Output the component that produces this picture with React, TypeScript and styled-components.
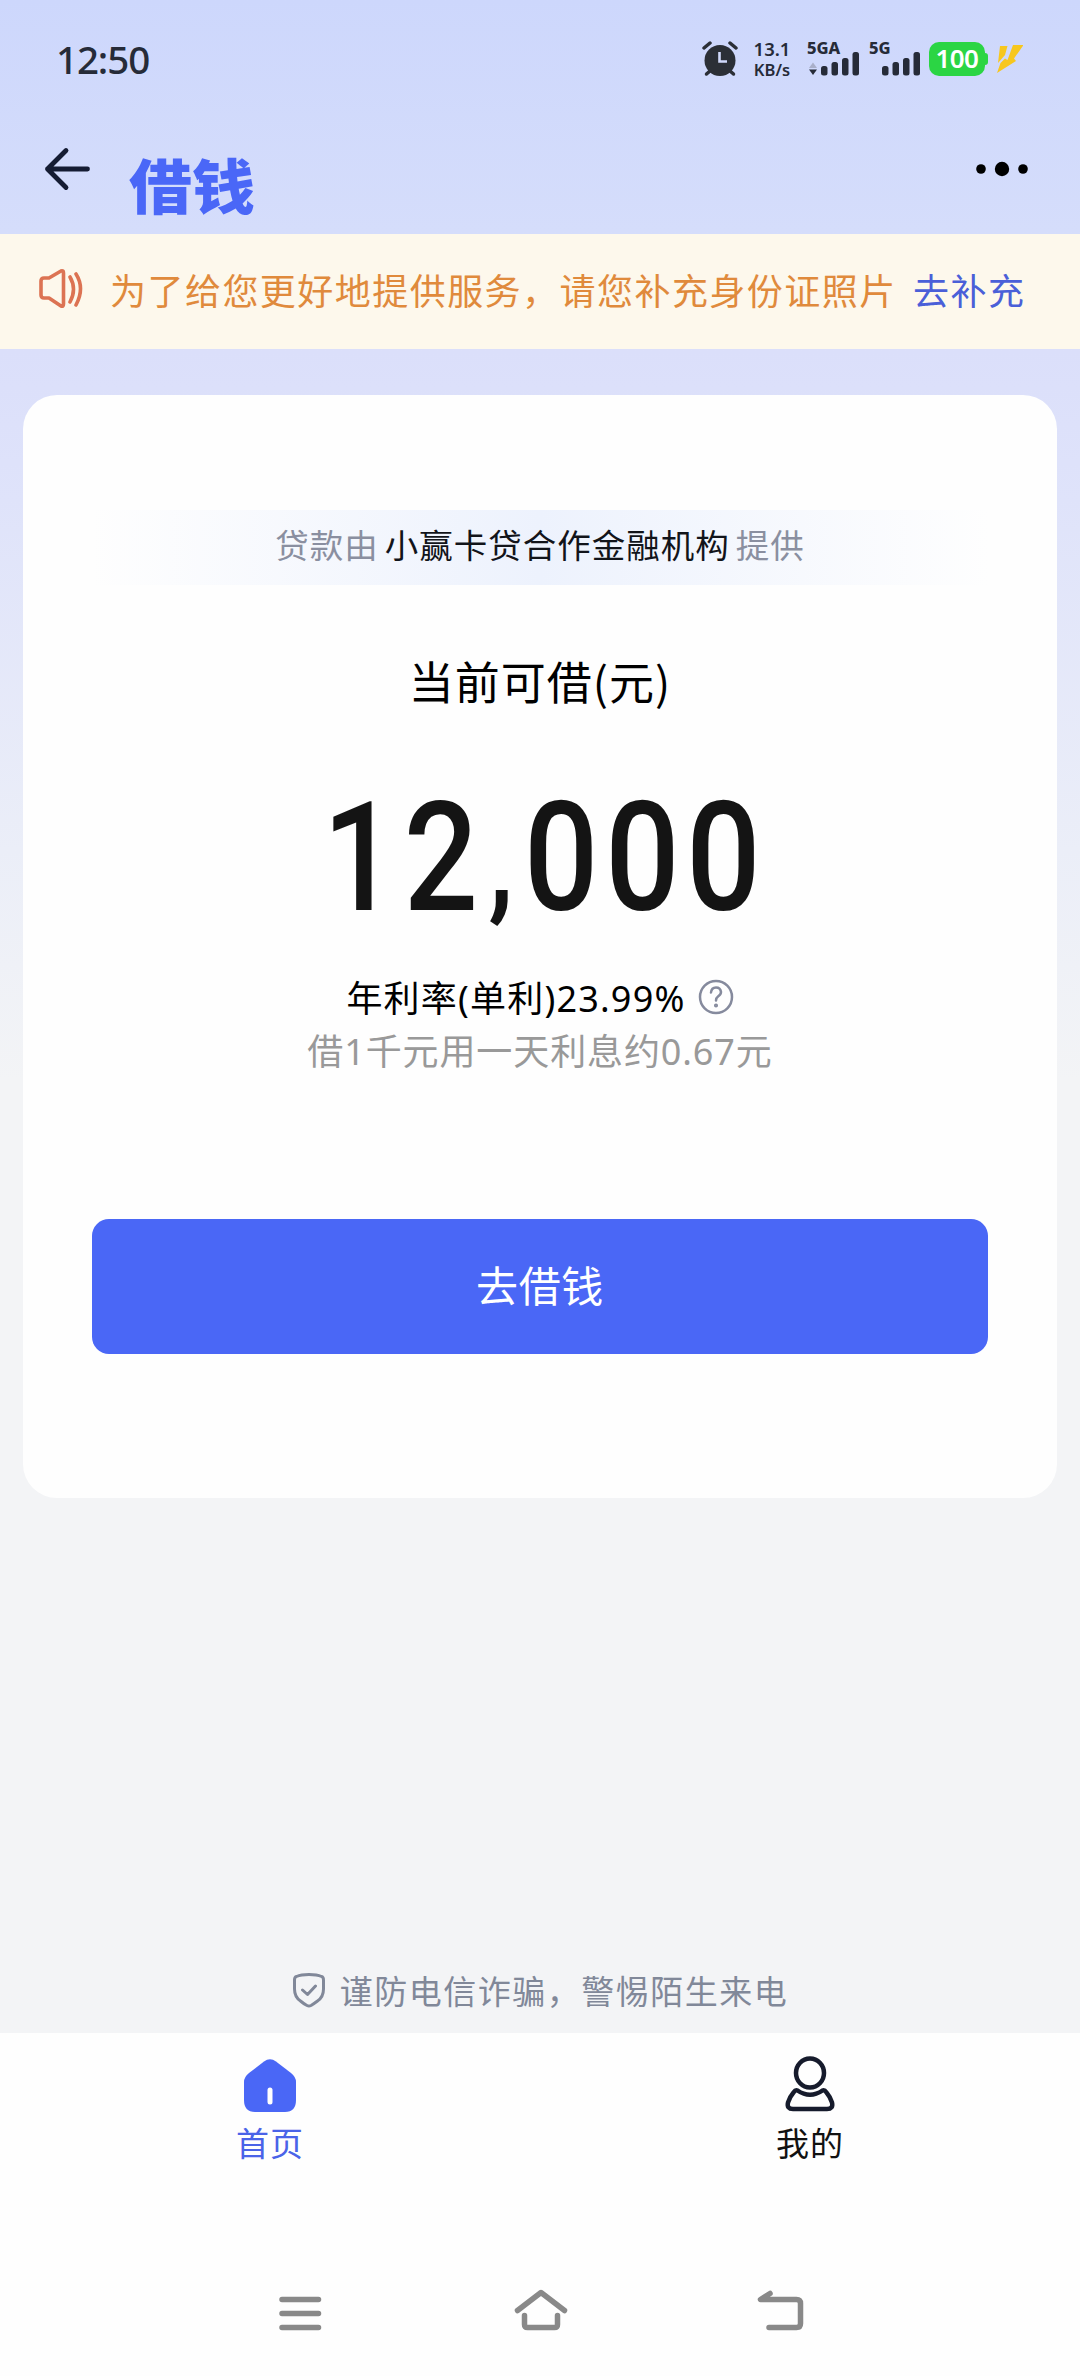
import React from 'react';
import styled, { createGlobalStyle } from 'styled-components';

const Global = createGlobalStyle`
  * { box-sizing: border-box; }
  body {
    margin: 0;
    font-family: "Noto Sans", "Noto Sans CJK SC", sans-serif;
    color: #000;
  }
`;

const Screen = styled.main`
  width: 1080px;
  height: 2376px;
  display: flex;
  flex-direction: column;
  overflow: hidden;
  background: linear-gradient(180deg, #cdd7fc 0, #d5ddfb 230px, #dbdffa 350px, #dfe3fa 500px, #ebeef8 850px, #f3f4f6 1080px, #f3f4f6 100%);
`;

const StatusBar = styled.header`
  height: 118px;
  padding: 0 57px 0 56px;
  display: flex;
  align-items: center;
  justify-content: space-between;
  color: #262b38;
`;

const Clock = styled.time`
  font: 500 38.5px/40px "Noto Sans", sans-serif;
  letter-spacing: -1.1px;
  width: 110px;
  padding-bottom: 1px;
  white-space: nowrap;
`;

const StatusIcons = styled.div`
  display: flex;
  align-items: center;
  height: 36px;
`;

const Speed = styled.div`
  width: 40px;
  margin: 0 15px 0 14px;
  display: flex;
  flex-direction: column;
  align-items: center;
  font: 600 18.5px/21px "Noto Sans", sans-serif;
  span:last-child { font-size: 16.5px; }
`;

const Signal = styled.div<{ $width: number }>`
  width: ${p => p.$width}px;
  height: 36px;
  display: flex;
  flex-direction: column;
  font: 800 16.5px/14px "Noto Sans", sans-serif;
  svg { display: block; margin-top: -4px; }
`;

const Battery = styled.div`
  width: 56px;
  height: 34px;
  border-radius: 10px;
  background: #2bd544;
  color: #fff;
  font: 600 26px/33px "Noto Sans", sans-serif;
  letter-spacing: -.6px;
  text-align: center;
  position: relative;
  &::after {
    content: "";
    position: absolute;
    right: -3px;
    top: 11px;
    width: 4px;
    height: 12px;
    border-radius: 0 3px 3px 0;
    background: #2bd544;
  }
`;

const TitleBar = styled.div`
  height: 116px;
  padding: 27px 52px 0 43px;
  display: flex;
  align-items: flex-start;
`;

const Title = styled.h1`
  margin: 6px auto 0 36px;
  font: 900 63px/66px "Noto Sans CJK SC", sans-serif;
  color: #4a67f7;
  transform: scaleY(.94);
`;

const Notice = styled.section`
  height: 115px;
  padding: 0 50px 5px 37px;
  display: flex;
  align-items: center;
  background: #fdf8ec;
  font-size: 36px;
  letter-spacing: 1.46px;
  white-space: nowrap;
  color: #e08a3c;
`;

const NoticeText = styled.span`
  width: 803px;
  margin-left: 25px;
`;

const NoticeLink = styled.a`
  color: #4a5fd8;
`;

const Card = styled.section`
  height: 1103px;
  margin: 46px 23px 0;
  padding: 115px 69px 0;
  border-radius: 34px;
  background: #fefefe;
  display: flex;
  flex-direction: column;
  align-items: center;
  white-space: nowrap;
`;

const Provider = styled.p`
  width: 100%;
  height: 75px;
  margin: 0;
  display: flex;
  justify-content: center;
  gap: 6px;
  line-height: 71px;
  font-size: 33.5px;
  letter-spacing: 1px;
  color: #8a8fa0;
  background: linear-gradient(90deg, #fefefe 0%, #edf2fd 50%, #fefefe 100%);
  strong { font-weight: 400; color: #12141a; }
`;

const Caption = styled.h2`
  margin: 66px 0 3px;
  font: 400 45px/60px "Noto Sans CJK SC", sans-serif;
  letter-spacing: 1px;
`;

const Amount = styled.div`
  margin-top: 59px;
  height: 170px;
  padding-left: 11px;
  font: 500 152px/170px Roboto, sans-serif;
  letter-spacing: 8px;
  color: #141414;
  transform: scaleX(.86);
`;

const Comma = styled.span`
  position: relative;
  top: -5px;
  margin: 0 4px 0 4px;
  font-size: 132px;
  line-height: 1;
`;

const Rate = styled.div`
  height: 54px;
  margin-top: 27px;
  display: flex;
  align-items: center;
  gap: 12px;
  font-size: 36px;
  letter-spacing: 1.2px;
  padding-bottom: 1px;
`;

const Daily = styled.p`
  margin: 0;
  font-size: 36px;
  line-height: 56px;
  letter-spacing: .9px;
  color: #999;
`;

const Action = styled.button`
  width: 100%;
  height: 135px;
  margin-top: 139px;
  padding: 0 0 5px;
  border: 0;
  border-radius: 17px;
  background: #4a67f6;
  color: #fff;
  font: 400 42px/60px "Noto Sans CJK SC", sans-serif;
  letter-spacing: .7px;
`;

const Warning = styled.footer`
  height: 84px;
  margin-top: auto;
  padding-bottom: 2px;
  display: flex;
  align-items: center;
  justify-content: center;
  gap: 14px;
  font-size: 33px;
  letter-spacing: 1.5px;
  color: #818899;
`;

const Tabs = styled.nav`
  height: 206px;
  display: grid;
  grid-template-columns: 1fr 1fr;
  background: #fefefe;
`;

const Tab = styled.a<{ $active?: boolean }>`
  display: flex;
  flex-direction: column;
  align-items: center;
  padding-top: 21px;
  font-size: 33px;
  line-height: 46px;
  letter-spacing: 1px;
  color: ${p => (p.$active ? '#4a63e8' : '#111')};
  svg { margin-bottom: 7px; }
`;

const SystemNav = styled.nav`
  height: 137px;
  padding: 45px 272px 0 273px;
  display: flex;
  justify-content: space-between;
  background: #fefefe;
`;

const Bars = () => (
  <g fill="#262b38">
    <rect x="0" y="15" width="6.5" height="9.5" rx="2.5" />
    <rect x="10.5" y="11" width="6.5" height="13.5" rx="2.5" />
    <rect x="21" y="7" width="6.5" height="17.5" rx="2.5" />
    <rect x="31.5" y="1" width="6.5" height="23.5" rx="2.5" />
  </g>
);

const AlarmIcon = () => (
  <svg width="36" height="36" viewBox="0 0 36 36" fill="none" strokeLinecap="round">
    <path d="M8 30 4.5 33M28 30l3.500 3" stroke="#2b2f36" strokeWidth="3.500" />
    <circle cx="18" cy="19.500" r="15.500" fill="#2b2f36" />
    <path d="M2 7 8 2M34 7 28 2" stroke="#2b2f36" strokeWidth="3.500" />
    <path d="M17.500 11v9.500H25" stroke="#d0d9fb" strokeWidth="2.600" strokeLinecap="butt" />
  </svg>
);

export default function App() {
  return (
    <>
      <Global />
      <Screen>
        <StatusBar>
          <Clock>12:50</Clock>
          <StatusIcons>
            <AlarmIcon />
            <Speed><span>13.1</span><span>KB/s</span></Speed>
            <Signal $width={62}>
              5GA
              <svg width="54" height="26" viewBox="-14 0 54 26">
                <path d="M-12 17 -8 11.500-4 17Z" fill="#a9afc9" />
                <path d="M-12 18.500h8L-8 24Z" fill="#262b38" />
                <Bars />
              </svg>
            </Signal>
            <Signal $width={60}>
              5G
              <svg width="54" height="26" viewBox="-13 0 54 26"><Bars /></svg>
            </Signal>
            <Battery>100</Battery>
            <svg width="38" height="32" viewBox="-11 0 38 32">
              <path d="M4 3h7.500L9 12 2 20ZM17 2h10.500L18 15.500l2 2.500L1 30 4.500 20 9 15.500l2.500 1.500Z" fill="#f7c71e" />
            </svg>
          </StatusIcons>
        </StatusBar>
        <TitleBar>
          <svg width="50" height="48" viewBox="0 0 50 48" fill="none" stroke="#151c33" strokeWidth="4.800" strokeLinecap="round" strokeLinejoin="round">
            <path d="M23 5.500 4.500 24 23 42.500M4.500 24h40" />
          </svg>
          <Title>借钱</Title>
          <svg width="56" height="48" viewBox="0 0 56 48">
            <circle cx="9" cy="24" r="4.800" /><circle cx="30" cy="24" r="7.200" /><circle cx="51" cy="24" r="4.800" />
          </svg>
        </TitleBar>
        <Notice>
          <svg width="48" height="44" viewBox="0 0 48 44" fill="none" stroke="#dc7353" strokeWidth="3.600" strokeLinecap="round" strokeLinejoin="round">
            <path d="M4 14q0-3 3-3h5L24 4q2.500-1 2.500 2v31q0 3-2.500 2L12 31H7q-3 0-3-3ZM33 10q7 12 0 25M39 7q9 14 0 31" />
          </svg>
          <NoticeText>为了给您更好地提供服务，请您补充身份证照片</NoticeText>
          <NoticeLink>去补充</NoticeLink>
        </Notice>
        <Card>
          <Provider>
            <span>贷款由</span><strong>小赢卡贷合作金融机构</strong><span>提供</span>
          </Provider>
          <Caption>当前可借(元)</Caption>
          <Amount>12<Comma>,</Comma>000</Amount>
          <Rate>
            <span>年利率(单利)23.99%</span>
            <svg width="36" height="36" viewBox="0 0 36 36" fill="none" stroke="#858a9d" strokeWidth="2.500" strokeLinecap="round">
              <circle cx="18" cy="18" r="16" />
              <path d="M13 13.500q.5-5 5-5t5 4.500q0 2.500-3 4.500-2 1.500-2 4" />
              <circle cx="18" cy="26.500" r=".8" fill="#858a9d" />
            </svg>
          </Rate>
          <Daily>借1千元用一天利息约0.67元</Daily>
          <Action>去借钱</Action>
        </Card>
        <Warning>
          <svg width="34" height="36" viewBox="0 0 34 36" fill="none" stroke="#818899" strokeWidth="3" strokeLinecap="round" strokeLinejoin="round">
            <path d="M17 2.500q8 0 12.500 2Q31.500 5 31.500 8v9q0 8-6 12-4 3-6.500 4.500-2 1-4 0Q12 32 8.500 29 2.500 25 2.500 17V8q0-3 2-3.500 4.500-2 12.500-2ZM10.500 18l5 4.500 8-8.500" />
          </svg>
          <span>谨防电信诈骗，警惕陌生来电</span>
        </Warning>
        <Tabs>
          <Tab $active>
            <svg width="56" height="60" viewBox="0 0 56 60">
              <path d="M22 7.500q6-4.500 12 0L49 19q5 4 5 9v18q0 12-11 12H13Q2 58 2 46V28q0-5 5-9Z" fill="#4a67f6" />
              <path d="M28 36v12" stroke="#fff" strokeWidth="5" strokeLinecap="round" />
            </svg>
            首页
          </Tab>
          <Tab>
            <svg width="56" height="60" viewBox="0 0 56 60" fill="none" stroke="#161b2c" strokeWidth="4.500" strokeLinejoin="round">
              <ellipse cx="28" cy="19" rx="14" ry="14.500" />
              <path d="M15.500 36.500q12.500 8.500 25 0 2-1 4 2 3.500 4 5.500 10 1.500 6.500-5 6.500H11q-6.500 0-5-6.500 2-6 5.500-10 2-3 4-2Z" />
            </svg>
            我的
          </Tab>
        </Tabs>
        <SystemNav>
          <svg width="54" height="60" viewBox="0 0 54 60" stroke="#898989" strokeWidth="5.500" strokeLinecap="round">
            <path d="M9 15.500h36.500M9 29.500h36.500M9 43.500h36.500" />
          </svg>
          <svg width="60" height="60" viewBox="0 0 60 60" fill="none" stroke="#898989" strokeWidth="5.500" strokeLinecap="round" strokeLinejoin="round">
            <path d="M6.500 26.500 30 8.500l23.500 18M13.500 31.500v9q0 3 3 3h27q3 0 3-3v-9" />
          </svg>
          <svg width="54" height="60" viewBox="0 0 54 60" fill="none" stroke="#898989" strokeWidth="5.500" strokeLinecap="round" strokeLinejoin="round">
            <path d="M16 9.500 6.500 15.500h36q4 0 4 4v20q0 4-4 4H15" />
          </svg>
        </SystemNav>
      </Screen>
    </>
  );
}
